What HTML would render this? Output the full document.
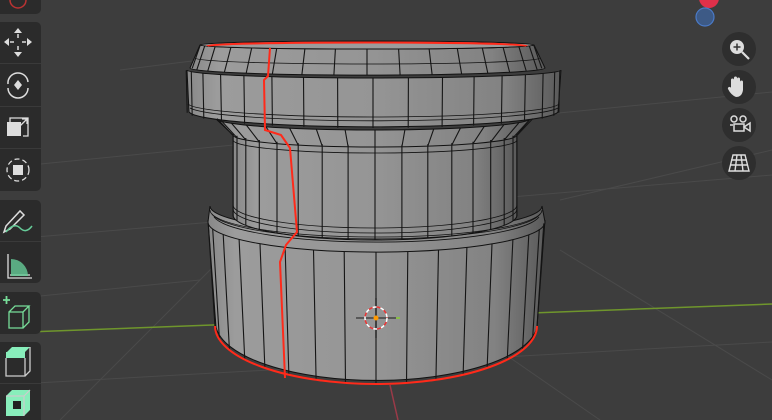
<!DOCTYPE html>
<html><head><meta charset="utf-8"><style>
html,body{margin:0;padding:0;background:#3d3d3d;width:772px;height:420px;overflow:hidden;font-family:"Liberation Sans",sans-serif}
svg{position:absolute;left:0;top:0}
</style></head><body>
<svg width="772" height="420" viewBox="0 0 772 420" xmlns="http://www.w3.org/2000/svg">
<defs>
<linearGradient id="g" x1="0" x2="1" y1="0" y2="0">
<stop offset="0" stop-color="#888"/><stop offset="0.08" stop-color="#9c9c9c"/><stop offset="0.5" stop-color="#959595"/><stop offset="0.85" stop-color="#828282"/><stop offset="1" stop-color="#5a5a5a"/>
</linearGradient>
</defs>
<rect width="772" height="420" fill="#3d3d3d"/>
<g stroke="#4a4a4a" stroke-width="1" fill="none">
<path d="M0 168 L772 92"/><path d="M0 240 L772 175"/><path d="M0 385 L772 342"/><path d="M60 420 L250 230"/><path d="M470 330 L600 420"/><path d="M560 250 L772 380"/><path d="M0 300 L200 280"/><path d="M560 200 L772 150"/><path d="M120 70 L200 60"/>
</g>
<path d="M0 333 L772 304" stroke="#6f962c" stroke-width="1.5"/>
<path d="M390 385 L398 420" stroke="#9a3a48" stroke-width="1.5"/>
<g id="obj" stroke="#111" stroke-width="1" fill="url(#g)">
<path d="M208 220 A168 30 0 0 0 545 220 L537 327 A161 58 0 0 1 216 327 Z"/>
<path d="M210 206 A166 26 0 0 0 542 206 L545 222 A168 30 0 0 1 208 222 Z"/>
<path d="M233 133 A142 12 0 0 0 517 133 L517 215 A142 25 0 0 1 233 215 Z"/>
<path d="M215 118 A158 12 0 0 0 531 118 L517 135 A142 12 0 0 1 233 135 Z"/>
<path d="M187 70 A187 8 0 0 0 561 70 L558 112 A185 16 0 0 1 189 112 Z"/>
<path d="M200 45 A167 4 0 0 0 534 45 L545 68 A175 7 0 0 1 190 68 Z"/>
<ellipse cx="367" cy="45" rx="167" ry="4" fill="#9c9c9c"/>
</g>
<g id="lines" stroke="#151515" stroke-width="1.1" fill="none"></g>
<g stroke="#111" stroke-width="0.8" fill="none">
<path d="M210 210 A166 27 0 0 0 542 210"/><path d="M212 214 A165 28 0 0 0 540 214"/><path d="M214 217 A164 29 0 0 0 539 217"/>
<path d="M188 104 A186 14 0 0 0 559 104"/><path d="M190 108 A186 15 0 0 0 558 108"/>
<path d="M195 58 A172 6 0 0 0 540 58"/><path d="M233 205 A142 23 0 0 0 517 205"/><path d="M233 209 A142 24 0 0 0 517 209"/>
<path d="M233 140 A142 13 0 0 0 517 140"/>
</g>
<g stroke="#ff2a1a" stroke-width="2" fill="none">
<path d="M207 46 A160 3.5 0 0 1 527 46"/>
<path d="M270 48 L268 76 L264 80 L265 130 L281 135 L290 148 L297 232 L286 245 L280 262 L285 378"/>
<path d="M215 326 A161 58 0 0 0 537 326"/>
</g>
<g>
<line x1="376" y1="298" x2="376" y2="338" stroke="#111" stroke-width="1.2"/>
<line x1="356" y1="318" x2="396" y2="318" stroke="#333" stroke-width="1.2"/>
<circle cx="376" cy="318" r="11" fill="none" stroke="#fff" stroke-width="1.5" stroke-dasharray="4 4"/>
<circle cx="376" cy="318" r="11" fill="none" stroke="#e33" stroke-width="1.5" stroke-dasharray="4 4" stroke-dashoffset="4"/>
<circle cx="376" cy="318" r="2.5" fill="#f90"/>
<line x1="396" y1="318" x2="400" y2="318" stroke="#8c3" stroke-width="1.5"/>
</g>
<g fill="#2b2b2b">
<rect x="-6" y="-6" width="47" height="20" rx="5"/>
<rect x="-6" y="22" width="47" height="169" rx="5"/>
<rect x="-6" y="200" width="47" height="83" rx="5"/>
<rect x="-6" y="292" width="47" height="42" rx="5"/>
<rect x="-6" y="342" width="47" height="90" rx="5"/>
</g>
<g stroke="#3a3a3a"><line x1="0" y1="63.5" x2="41" y2="63.5"/><line x1="0" y1="106.5" x2="41" y2="106.5"/><line x1="0" y1="148.5" x2="41" y2="148.5"/><line x1="0" y1="241.5" x2="41" y2="241.5"/><line x1="0" y1="383.5" x2="41" y2="383.5"/></g>
<path d="M10 0 A8 8 0 0 0 26 0" stroke="#b33" stroke-width="1.5" fill="none"/>
<g fill="#ddd" stroke="#ddd">
<path d="M18 28 l-4 5h8z M18 57 l-4 -5h8z M4 42 l5 -4v8z M32 42 l-5 -4v8z" stroke="none"/>
<path d="M18 34v4 M18 46v4 M10 42h4 M22 42h4" stroke-width="1.5"/>
<path d="M8 84 A10 10 0 0 1 28 82 M28 88 A10 10 0 0 1 8 88" fill="none" stroke-width="1.5"/>
<path d="M18 80 l4 5 -4 5 -4 -5z" stroke="none"/>
<rect x="7" y="122" width="14" height="14" stroke="none"/>
<path d="M10 125 V118 H28 V136 H23 M20 126 L27 119 M22 119h5v5" fill="none" stroke-width="1.3"/>
<circle cx="18" cy="170" r="11" fill="none" stroke-width="1.3" stroke-dasharray="5 3"/>
<rect x="13" y="165" width="10" height="10" stroke="none"/>
<path d="M4 232 L6 226 L20 211 L24 215 L10 229 Z" fill="none" stroke-width="1.5"/>
<path d="M8 254 V278 H32 M10 275 H30" fill="none" stroke-width="1.3"/>
</g>
<path d="M6 232 Q14 222 20 228 T32 226" stroke="#6c9" stroke-width="1.5" fill="none"/>
<path d="M11 256 V276 L28 276 A17 17 0 0 0 11 259Z" fill="#6c9" opacity="0.8"/>
<path d="M3 300 h7 M6.5 296 v8" stroke="#7d9" stroke-width="1.8"/>
<path d="M9 312 H23 V328 H9Z M9 312 L15 306 H29 L23 312 M29 306 V322 L23 328" fill="none" stroke="#7d9" stroke-width="1.3"/>
<path d="M7 352 L12 347 H30 L25 352Z" fill="#8eb"/><rect x="6" y="352" width="19" height="6" fill="#8eb"/>
<path d="M6 358 V376 H25 V358 M25 376 L30 371 V347" fill="none" stroke="#ccc" stroke-width="1.3"/>
<path d="M6 396 L12 390 H30 V410 L24 416 H6Z" fill="#8eb"/>
<rect x="13" y="401" width="8" height="8" fill="#222"/>
<path d="M6 396 H24 V416 M24 396 L30 390" fill="none" stroke="#ccc" stroke-width="1.2"/>
<circle cx="709" cy="-2" r="10" fill="#e0304a"/>
<circle cx="705" cy="17" r="9" fill="#3d5a86" stroke="#4a7ac8" stroke-width="1.2"/>
<g fill="#2e2e2e"><circle cx="739" cy="49" r="17"/><circle cx="739" cy="87" r="17"/><circle cx="739" cy="125" r="17"/><circle cx="739" cy="163" r="17"/></g>
<circle cx="737" cy="47" r="7" fill="#ddd"/><path d="M733.5 47h7M737 43.5v7" stroke="#333" stroke-width="1.5"/><path d="M742 52 L749 59" stroke="#ddd" stroke-width="2.2"/>
<path d="M731 88 V80 a1.5 1.5 0 0 1 3 0 V86 V78 a1.5 1.5 0 0 1 3 0 V86 V79 a1.5 1.5 0 0 1 3 0 V87 V82 a1.5 1.5 0 0 1 3 0 V90 Q742 97 736 97 Q731 95 728 89 a1.5 1.5 0 0 1 3 -1Z" fill="#ddd"/>
<g fill="none" stroke="#ddd" stroke-width="1.5"><circle cx="734" cy="119" r="3"/><circle cx="743" cy="119" r="3"/><rect x="734" y="124" width="10" height="7"/><path d="M744 127 L750 123 V131Z M730 125 h3"/></g>
<g fill="none" stroke="#ddd" stroke-width="1.4"><path d="M733 155 H745 L749 171 H729 Z M731 160 H747 M730 165 H748 M737 155 L735 171 M741 155 L743 171"/></g>
<script>
(function(){
var g=document.getElementById('lines'),s='';
function band(cx,rt,yt,ryt,rb,yb,ryb,n){
 for(var k=-n;k<=n;k++){var a=k*Math.PI/(2*n)*0.97;var sn=Math.sin(a),cs=Math.cos(a);
 s+='M'+(cx+rt*sn).toFixed(1)+' '+(yt+ryt*cs).toFixed(1)+'L'+(cx+rb*sn).toFixed(1)+' '+(yb+ryb*cs).toFixed(1);}
}
band(376,168,222,30,161,327,58,8);
band(375,142,133,12,142,215,25,8);
band(373,187,70,8,186,112,16,8);
band(367,167,45,4,175,68,7,8);
band(375,158,118,12,142,135,12,8);
var p=document.createElementNS('http://www.w3.org/2000/svg','path');p.setAttribute('d',s);g.appendChild(p);
})();
</script>
</svg>
</body></html>
